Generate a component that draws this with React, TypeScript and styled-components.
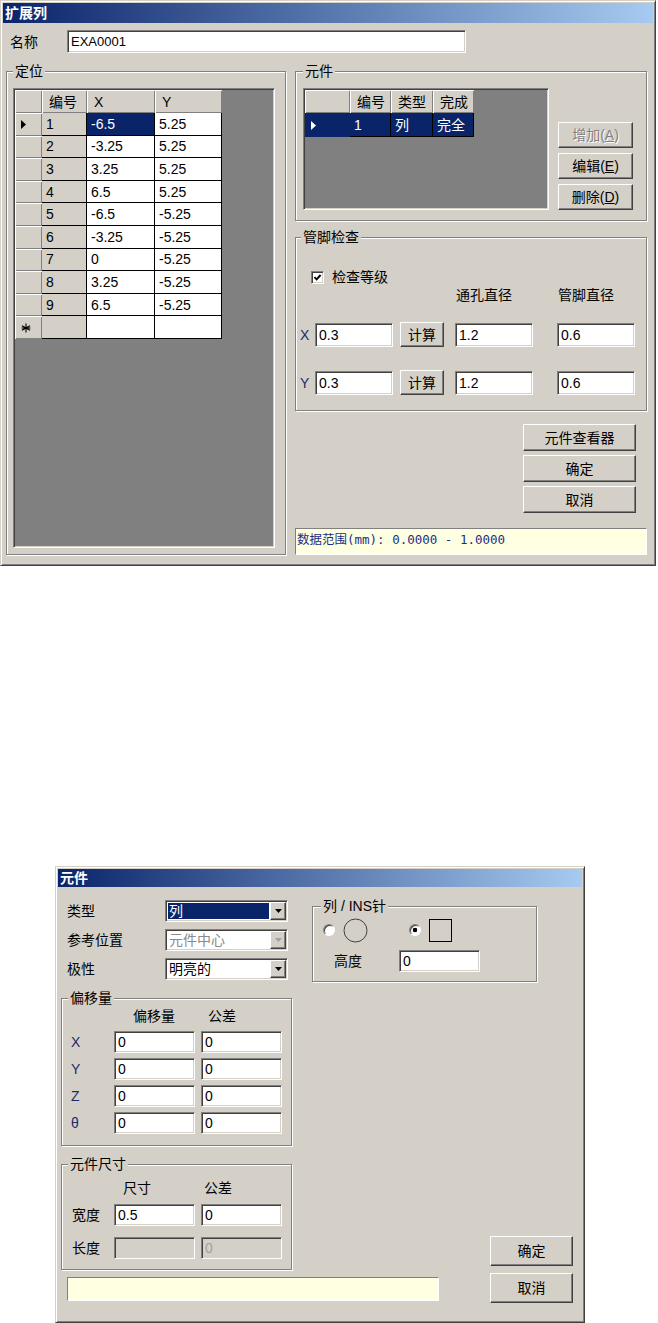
import React from "react";
import styled, { createGlobalStyle, css } from "styled-components";

const FACE = "#d4d0c8";
const NAVY = "#0a246a";

const GlobalStyle = createGlobalStyle`
  html, body {
    margin: 0;
    padding: 0;
    background: #fff;
  }
  body {
    font-family: "Liberation Sans", "Noto Sans CJK SC", sans-serif;
    font-size: 14px;
    line-height: 16px;
    color: #000;
  }
  * {
    box-sizing: border-box;
  }
`;

const sunkenEdge = css`
  border: 1px solid;
  border-color: #808080 #fff #fff #808080;
  box-shadow: inset 1px 1px 0 #404040, inset -1px -1px 0 ${FACE};
`;

const raisedEdge = css`
  border: 1px solid;
  border-color: #fff #404040 #404040 #fff;
  box-shadow: inset -1px -1px 0 #808080;
`;

const Page = styled.div`
  display: flex;
  flex-direction: column;
  align-items: flex-start;
  gap: 300px;
`;

const Window = styled.div<{ $width: number; $height: number; $offset?: number }>`
  width: ${(p) => p.$width}px;
  height: ${(p) => p.$height}px;
  margin-left: ${(p) => p.$offset ?? 0}px;
  display: flex;
  flex-direction: column;
  padding: 2px;
  background: ${FACE};
  border: 1px solid;
  border-color: ${FACE} #404040 #404040 ${FACE};
  box-shadow: inset 1px 1px 0 #fff, inset -1px -1px 0 #808080;
`;

const TitleBar = styled.div<{ $height: number }>`
  flex: none;
  height: ${(p) => p.$height}px;
  display: flex;
  align-items: center;
  padding-left: 2px;
  background: linear-gradient(to right, ${NAVY}, #a6caf0);
  color: #fff;
  font-weight: bold;
`;

const Group = styled.fieldset<{ $pad: string; $top?: number; $width?: number }>`
  margin: ${(p) => p.$top ?? 0}px 0 0 0;
  padding: ${(p) => p.$pad};
  min-width: 0;
  width: ${(p) => (p.$width ? `${p.$width}px` : "auto")};
  display: flex;
  flex-direction: column;
  border: 1px solid #808080;
  box-shadow: inset 1px 1px 0 #fff, 1px 1px 0 #fff;
`;

const GroupTitle = styled.legend<{ $indent?: number }>`
  margin-left: ${(p) => p.$indent ?? 0}px;
  padding: 0 2px;
  line-height: 16px;
  background: ${FACE};
`;

const FieldLabel = styled.span<{ $width?: number; $indent?: number; $latin?: boolean }>`
  flex: none;
  width: ${(p) => (p.$width ? `${p.$width}px` : "auto")};
  margin-left: ${(p) => p.$indent ?? 0}px;
  white-space: nowrap;
  color: ${(p) => (p.$latin ? "#1e2a6e" : "#000")};
`;

const TextBox = styled.div<{ $width: number; $height: number; $disabled?: boolean; $small?: boolean }>`
  ${sunkenEdge}
  flex: none;
  width: ${(p) => p.$width}px;
  height: ${(p) => p.$height}px;
  display: flex;
  align-items: center;
  padding-left: 3px;
  background: ${(p) => (p.$disabled ? FACE : "#fff")};
  color: ${(p) => (p.$disabled ? "#a0a0a0" : "#000")};
  font-size: ${(p) => (p.$small ? 13 : 14)}px;
  white-space: nowrap;
`;

const PushButton = styled.button<{ $width: number; $height: number }>`
  ${raisedEdge}
  flex: none;
  width: ${(p) => p.$width}px;
  height: ${(p) => p.$height}px;
  padding: 0;
  display: flex;
  align-items: center;
  justify-content: center;
  background: ${FACE};
  font: inherit;
  color: #000;

  &:disabled {
    color: #808080;
    text-shadow: 1px 1px 0 #fff;
  }
`;

const StatusBar = styled.div`
  height: 26px;
  padding: 3px 0 0 1px;
  border: 1px solid;
  border-color: #808080 #fff #fff #808080;
  background: #ffffe1;
  color: #1c2f86;
  font-family: "DejaVu Sans Mono", "Noto Sans CJK SC", monospace;
  font-size: 12.5px;
  line-height: 16px;
  white-space: nowrap;
`;

/* ---------- data grid ---------- */

type CellKind = "corner" | "head" | "rowhead" | "key" | "value";

const GridFrame = styled.div<{ $columns: string; $rowSize: number; $width?: number; $height?: number }>`
  ${sunkenEdge}
  flex: ${(p) => (p.$height ? "none" : "1")};
  width: ${(p) => (p.$width ? `${p.$width}px` : "auto")};
  height: ${(p) => (p.$height ? `${p.$height}px` : "auto")};
  padding: 1px;
  display: grid;
  grid-template-columns: ${(p) => p.$columns};
  grid-template-rows: 23px;
  grid-auto-rows: ${(p) => p.$rowSize}px;
  align-content: start;
  justify-content: start;
  background: #808080;
  overflow: hidden;
`;

const Cell = styled.div<{ $kind: CellKind; $active?: boolean }>`
  display: flex;
  align-items: center;
  padding-left: ${(p) => (p.$kind === "head" ? 7 : p.$kind === "key" || p.$kind === "value" ? 4 : 6)}px;
  overflow: hidden;
  white-space: nowrap;
  background: ${(p) => (p.$active ? NAVY : p.$kind === "value" ? "#fff" : FACE)};
  color: ${(p) => (p.$active ? "#fff" : "#000")};
  ${(p) =>
    p.$kind === "key" || p.$kind === "value"
      ? css`
          border-right: 1px solid #000;
          border-bottom: 1px solid #000;
        `
      : !p.$active &&
        css`
          box-shadow: inset 1px 1px 0 #fff, inset -1px -1px 0 #808080;
        `}
`;

const RowPointer: React.FC<{ color: string }> = ({ color }) => (
  <svg width="5" height="9" viewBox="0 0 5 9">
    <polygon points="0,0 5,4.5 0,9" fill={color} />
  </svg>
);

const NewRowMark: React.FC = () => (
  <svg width="10" height="10" viewBox="0 0 10 10">
    <path d="M5 0.5V9.5M1 2.7L9 7.3M1 7.3L9 2.7M0.5 5H9.5" stroke="#000" strokeWidth="1.1" fill="none" />
  </svg>
);

interface GridColumn {
  title: string;
  width: number;
  kind: "key" | "value";
}

interface DataGridProps {
  columns: GridColumn[];
  rowHeadWidth: number;
  rows: string[][];
  rowSize: number;
  pointerRow?: number;
  selectedRow?: number;
  selectedCell?: [number, number];
  withNewRow?: boolean;
  width?: number;
  height?: number;
}

const DataGrid: React.FC<DataGridProps> = ({
  columns,
  rowHeadWidth,
  rows,
  rowSize,
  pointerRow,
  selectedRow,
  selectedCell,
  withNewRow,
  width,
  height,
}) => {
  const template = [rowHeadWidth, ...columns.map((c) => c.width)].map((w) => `${w}px`).join(" ");
  return (
    <GridFrame $columns={template} $rowSize={rowSize} $width={width} $height={height}>
      <Cell $kind="corner" />
      {columns.map((c) => (
        <Cell key={c.title} $kind="head">
          {c.title}
        </Cell>
      ))}
      {rows.map((row, r) => {
        const rowActive = r === selectedRow;
        return (
          <React.Fragment key={r}>
            <Cell $kind="rowhead" $active={rowActive}>
              {r === pointerRow && <RowPointer color={rowActive ? "#fff" : "#000"} />}
            </Cell>
            {row.map((value, c) => (
              <Cell
                key={c}
                $kind={columns[c].kind}
                $active={rowActive || (!!selectedCell && selectedCell[0] === r && selectedCell[1] === c)}
              >
                {value}
              </Cell>
            ))}
          </React.Fragment>
        );
      })}
      {withNewRow && (
        <>
          <Cell $kind="rowhead">
            <NewRowMark />
          </Cell>
          {columns.map((c) => (
            <Cell key={c.title} $kind={c.kind} />
          ))}
        </>
      )}
    </GridFrame>
  );
};

/* ---------- dialog 1: 扩展列 ---------- */

const ExpandBody = styled.div`
  flex: 1;
  min-height: 0;
  display: flex;
  flex-direction: column;
  padding: 7px 6px 8px 3px;
`;

const NameRow = styled.div`
  display: flex;
  align-items: center;
  padding-left: 4px;
`;

const Columns = styled.div`
  flex: 1;
  min-height: 0;
  display: flex;
  gap: 9px;
  margin-top: 10px;
`;

const RightColumn = styled.div`
  flex: none;
  width: 352px;
  display: flex;
  flex-direction: column;
`;

const PartsRow = styled.div`
  display: flex;
  align-items: flex-end;
  gap: 9px;
`;

const ButtonStack = styled.div<{ $gap: number }>`
  display: flex;
  flex-direction: column;
  gap: ${(p) => p.$gap}px;
`;

const CheckRow = styled.label`
  display: flex;
  align-items: center;
  gap: 8px;
  height: 16px;
  margin-top: 24px;
  padding-left: 11px;
`;

const CheckBox = styled.span`
  ${sunkenEdge}
  flex: none;
  width: 13px;
  height: 13px;
  display: flex;
  align-items: center;
  justify-content: center;
  background: #fff;
`;

const PinLine = styled.div<{ $top: number; $height: number }>`
  display: grid;
  grid-template-columns: 15px 85px 55px 102px 78px;
  align-items: center;
  height: ${(p) => p.$height}px;
  margin-top: ${(p) => p.$top}px;
`;

const ActionStack = styled.div`
  display: flex;
  flex-direction: column;
  align-items: flex-end;
  gap: 4px;
  margin-top: 13px;
  padding-right: 11px;
`;

const RangeBar = styled(StatusBar)`
  margin-top: auto;
  height: 27px;
`;

const Mnemonic: React.FC<{ label: string; hotkey: string }> = ({ label, hotkey }) => (
  <span>
    {label}(<u>{hotkey}</u>)
  </span>
);

const pointRows = [
  ["1", "-6.5", "5.25"],
  ["2", "-3.25", "5.25"],
  ["3", "3.25", "5.25"],
  ["4", "6.5", "5.25"],
  ["5", "-6.5", "-5.25"],
  ["6", "-3.25", "-5.25"],
  ["7", "0", "-5.25"],
  ["8", "3.25", "-5.25"],
  ["9", "6.5", "-5.25"],
];

const pointColumns: GridColumn[] = [
  { title: "编号", width: 45, kind: "key" },
  { title: "X", width: 68, kind: "value" },
  { title: "Y", width: 67, kind: "value" },
];

const partColumns: GridColumn[] = [
  { title: "编号", width: 41, kind: "key" },
  { title: "类型", width: 42, kind: "value" },
  { title: "完成", width: 41, kind: "value" },
];

const pinRows = [
  { axis: "X", pitch: "0.3", hole: "1.2", pin: "0.6", top: 19 },
  { axis: "Y", pitch: "0.3", hole: "1.2", pin: "0.6", top: 24 },
];

const ExpandDialog: React.FC = () => (
  <Window $width={656} $height={566}>
    <TitleBar $height={20}>扩展列</TitleBar>
    <ExpandBody>
      <NameRow>
        <FieldLabel $width={57}>名称</FieldLabel>
        <TextBox $width={399} $height={23} $small>
          EXA0001
        </TextBox>
      </NameRow>
      <Columns>
        <Group $pad="9px 10px 6px 6px" $width={280}>
          <GroupTitle>定位</GroupTitle>
          <DataGrid
            columns={pointColumns}
            rowHeadWidth={27}
            rows={pointRows}
            rowSize={22.6}
            pointerRow={0}
            selectedCell={[0, 1]}
            withNewRow
          />
        </Group>
        <RightColumn>
          <Group $pad="9px 13px 10px 7px">
            <GroupTitle>元件</GroupTitle>
            <PartsRow>
              <DataGrid
                columns={partColumns}
                rowHeadWidth={45}
                rows={[["1", "列", "完全"]]}
                rowSize={24}
                pointerRow={0}
                selectedRow={0}
                width={246}
                height={122}
              />
              <ButtonStack $gap={5}>
                <PushButton $width={75} $height={26} disabled>
                  <Mnemonic label="增加" hotkey="A" />
                </PushButton>
                <PushButton $width={75} $height={26}>
                  <Mnemonic label="编辑" hotkey="E" />
                </PushButton>
                <PushButton $width={75} $height={26}>
                  <Mnemonic label="删除" hotkey="D" />
                </PushButton>
              </ButtonStack>
            </PartsRow>
          </Group>
          <Group $pad="0 10px 16px 4px" $top={8}>
            <GroupTitle $indent={1}>管脚检查</GroupTitle>
            <CheckRow>
              <CheckBox>
                <svg width="9" height="9" viewBox="0 0 9 9">
                  <path d="M1.5 4.2L3.6 6.4L7.6 2" stroke="#000" strokeWidth="1.9" fill="none" />
                </svg>
              </CheckBox>
              检查等级
            </CheckRow>
            <PinLine $top={2} $height={16}>
              <span />
              <span />
              <span />
              <FieldLabel $indent={1}>通孔直径</FieldLabel>
              <FieldLabel $indent={1}>管脚直径</FieldLabel>
            </PinLine>
            {pinRows.map((row) => (
              <PinLine key={row.axis} $top={row.top} $height={24}>
                <FieldLabel $latin>{row.axis}</FieldLabel>
                <TextBox $width={78} $height={24}>
                  {row.pitch}
                </TextBox>
                <PushButton $width={44} $height={25}>
                  计算
                </PushButton>
                <TextBox $width={78} $height={24}>
                  {row.hole}
                </TextBox>
                <TextBox $width={78} $height={24}>
                  {row.pin}
                </TextBox>
              </PinLine>
            ))}
          </Group>
          <ActionStack>
            <PushButton $width={113} $height={27}>
              元件查看器
            </PushButton>
            <PushButton $width={113} $height={27}>
              确定
            </PushButton>
            <PushButton $width={113} $height={27}>
              取消
            </PushButton>
          </ActionStack>
          <RangeBar>数据范围(mm): 0.0000 - 1.0000</RangeBar>
        </RightColumn>
      </Columns>
    </ExpandBody>
  </Window>
);

/* ---------- dialog 2: 元件 ---------- */

const PartBody = styled.div`
  flex: 1;
  display: grid;
  grid-template-columns: 251px 178px 83px;
  grid-template-rows: auto auto auto;
  align-content: start;
  padding: 11px 9px 0 3px;
`;

const FormColumn = styled.div`
  grid-column: 1;
  grid-row: 1 / 3;
  width: 231px;
  margin-top: 2px;
  display: flex;
  flex-direction: column;
`;

const FormRow = styled.div`
  display: flex;
  align-items: center;
  height: 22px;
  padding-left: 6px;

  & + & {
    margin-top: 7px;
  }
`;

const ComboFrame = styled.div`
  ${sunkenEdge}
  flex: none;
  width: 123px;
  height: 22px;
  display: flex;
  padding: 1px;
  background: #fff;
`;

const ComboText = styled.div<{ $selected?: boolean; $disabled?: boolean }>`
  flex: 1;
  margin: 1px;
  padding-left: 1px;
  display: flex;
  align-items: center;
  background: ${(p) => (p.$selected ? NAVY : "transparent")};
  color: ${(p) => (p.$selected ? "#fff" : p.$disabled ? "#8a8a8a" : "#000")};
  white-space: nowrap;
`;

const ComboButton = styled.div`
  ${raisedEdge}
  flex: none;
  width: 16px;
  display: flex;
  align-items: center;
  justify-content: center;
  background: ${FACE};
`;

interface ComboBoxProps {
  value: string;
  selected?: boolean;
  disabled?: boolean;
}

const ComboBox: React.FC<ComboBoxProps> = ({ value, selected, disabled }) => (
  <ComboFrame>
    <ComboText $selected={selected} $disabled={disabled}>
      {value}
    </ComboText>
    <ComboButton>
      <svg width="7" height="4" viewBox="0 0 7 4">
        <polygon points="0,0 7,0 3.5,4" fill={disabled ? "#a0a0a0" : "#000"} />
      </svg>
    </ComboButton>
  </ComboFrame>
);

const OffsetGrid = styled.div`
  display: grid;
  grid-template-columns: 37px 81px 81px;
  grid-template-rows: 20px repeat(4, 22px);
  column-gap: 6px;
  row-gap: 5px;
  align-items: center;
`;

const SizeGrid = styled.div`
  display: grid;
  grid-template-columns: 37px 81px 81px;
  grid-template-rows: 32px 33px 22px;
  column-gap: 6px;
  align-items: start;
  line-height: 22px;
`;

const SizeHead = styled(FieldLabel)`
  line-height: 32px;
`;

const InsGroup = styled(Group)`
  grid-column: 2 / 4;
  grid-row: 1;
  align-self: start;
`;

const ShapeRow = styled.div`
  display: flex;
  align-items: center;
  gap: 41px;
  height: 24px;
`;

const ShapeOption = styled.div`
  display: flex;
  align-items: center;
  gap: 8px;
`;

const Radio = styled.span<{ $checked?: boolean }>`
  flex: none;
  width: 12px;
  height: 12px;
  border-radius: 50%;
  border: 1px solid;
  border-color: #808080 #fff #fff #808080;
  box-shadow: inset 1px 1px 0 #404040;
  background: ${(p) => (p.$checked ? "radial-gradient(circle, #000 0 2px, #fff 2.6px)" : "#fff")};
`;

const HeightRow = styled.div`
  display: flex;
  align-items: center;
  margin-top: 8px;
  padding-left: 11px;
`;

const DialogButtons = styled.div`
  grid-column: 3;
  grid-row: 2 / 4;
  align-self: end;
  display: flex;
  flex-direction: column;
  gap: 7px;
`;

const NoteBar = styled(StatusBar)`
  grid-column: 1 / 3;
  grid-row: 3;
  width: 372px;
  height: 24px;
  margin: 7px 0 2px 6px;
`;

const offsetRows = ["X", "Y", "Z", "θ"];

const PartDialog: React.FC = () => (
  <Window $width={530} $height={457} $offset={55}>
    <TitleBar $height={18}>元件</TitleBar>
    <PartBody>
      <FormColumn>
        <FormRow>
          <FieldLabel $width={98}>类型</FieldLabel>
          <ComboBox value="列" selected />
        </FormRow>
        <FormRow>
          <FieldLabel $width={98}>参考位置</FieldLabel>
          <ComboBox value="元件中心" disabled />
        </FormRow>
        <FormRow>
          <FieldLabel $width={98}>极性</FieldLabel>
          <ComboBox value="明亮的" />
        </FormRow>
        <Group $pad="0 9px 11px 9px" $top={10}>
          <GroupTitle $indent={-3}>偏移量</GroupTitle>
          <OffsetGrid>
            <span />
            <FieldLabel $indent={19}>偏移量</FieldLabel>
            <FieldLabel $indent={7}>公差</FieldLabel>
            {offsetRows.map((axis) => (
              <React.Fragment key={axis}>
                <FieldLabel $latin>{axis}</FieldLabel>
                <TextBox $width={81} $height={22}>
                  0
                </TextBox>
                <TextBox $width={81} $height={22}>
                  0
                </TextBox>
              </React.Fragment>
            ))}
          </OffsetGrid>
        </Group>
        <Group $pad="0 9px 10px 9px" $top={10}>
          <GroupTitle $indent={-3}>元件尺寸</GroupTitle>
          <SizeGrid>
            <span />
            <SizeHead $indent={9}>尺寸</SizeHead>
            <SizeHead $indent={3}>公差</SizeHead>
            <FieldLabel $indent={1}>宽度</FieldLabel>
            <TextBox $width={81} $height={22}>
              0.5
            </TextBox>
            <TextBox $width={81} $height={22}>
              0
            </TextBox>
            <FieldLabel $indent={1}>长度</FieldLabel>
            <TextBox $width={81} $height={22} $disabled />
            <TextBox $width={81} $height={22} $disabled>
              0
            </TextBox>
          </SizeGrid>
        </Group>
      </FormColumn>

      <InsGroup $pad="4px 0 9px 10px" $width={225}>
        <GroupTitle $indent={-2}>列 / INS针</GroupTitle>
        <ShapeRow>
          <ShapeOption>
            <Radio />
            <svg width="25" height="25" viewBox="0 0 25 25">
              <circle cx="12.5" cy="12.5" r="11.5" stroke="#404040" strokeWidth="1" fill="none" />
            </svg>
          </ShapeOption>
          <ShapeOption>
            <Radio $checked />
            <svg width="23" height="23" viewBox="0 0 23 23">
              <rect x="0.5" y="0.5" width="22" height="22" stroke="#000" strokeWidth="1" fill="none" />
            </svg>
          </ShapeOption>
        </ShapeRow>
        <HeightRow>
          <FieldLabel $width={65}>高度</FieldLabel>
          <TextBox $width={81} $height={22}>
            0
          </TextBox>
        </HeightRow>
      </InsGroup>

      <DialogButtons>
        <PushButton $width={83} $height={30}>
          确定
        </PushButton>
        <PushButton $width={83} $height={30}>
          取消
        </PushButton>
      </DialogButtons>

      <NoteBar />
    </PartBody>
  </Window>
);

const App: React.FC = () => (
  <>
    <GlobalStyle />
    <Page>
      <ExpandDialog />
      <PartDialog />
    </Page>
  </>
);

export default App;
